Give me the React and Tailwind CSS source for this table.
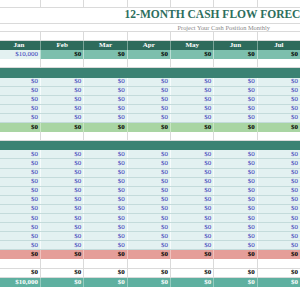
import React from 'react';

const months = ['Jan', 'Feb', 'Mar', 'Apr', 'May', 'Jun', 'Jul'];
const serif = { fontFamily: '"Liberation Serif", "Times New Roman", serif' };

function Cells({ rowCls, cellCls, values }) {
  return (
    <div className={`grid grid-cols-[repeat(7,43.33px)] h-[9.1px] ${rowCls || ''}`}>
      {values.map((v, i) => (
        <div key={i} className={`h-full flex items-center ${cellCls} ${typeof v === 'object' && v && v.cls ? v.cls : ''}`}>
          {typeof v === 'object' && v ? v.t : v}
        </div>
      ))}
    </div>
  );
}

function Blank({ h = 'h-[9.1px]' }) {
  return (
    <div className={`grid grid-cols-[repeat(7,43.33px)] ${h} border-b border-[#dadada]`}>
      {months.map((m) => (
        <div key={m} className="h-full border-r border-[#dadada]" />
      ))}
    </div>
  );
}

function Band() {
  return <div className="h-[9.1px] bg-[#3b8273] w-[304px]" />;
}

function Inputs({ n }) {
  return Array.from({ length: n }).map((_, r) => (
    <Cells
      key={r}
      rowCls="bg-[#e3f1f1] border-b border-[#c4dbdb]"
      cellCls="justify-end pr-[2px] text-[7px] leading-none text-[#3535b8] border-r border-[#f6fbfb]"
      values={months.map(() => '$0')}
    />
  ));
}

export default function App() {
  return (
    <div className="w-[300px] h-[300px] overflow-hidden bg-white" style={serif}>
      <div className="-ml-[2.3px] w-[304px]">
        <Blank h="h-[7.5px]" />
        <div className="h-[16px] border-b border-[#dadada] overflow-hidden">
          <div className="w-[452px] h-full flex items-center justify-center whitespace-nowrap text-[11.5px] font-bold text-[#2d6e5d]">
            12-MONTH CASH FLOW FORECAST
          </div>
        </div>
        <div className="h-[8.6px] border-b border-[#dadada] overflow-hidden">
          <div className="w-[452px] h-full flex items-center justify-center whitespace-nowrap text-[6.4px] text-[#8a8a8a]">
            Project Your Cash Position Monthly
          </div>
        </div>
        <Blank />
        <Cells
          rowCls="bg-[#2e6b5c]"
          cellCls="justify-center text-[7px] leading-none font-bold text-white border-r border-[#7aa398]"
          values={months}
        />
        <Cells
          rowCls="bg-[#7dbfad]"
          cellCls="justify-end pr-[2px] text-[7px] leading-none font-bold text-black border-r border-[#b9ddd3]"
          values={months.map((m, i) =>
            i === 0 ? { t: '$10,000', cls: 'bg-[#e3f1f1] !text-[#3535b8] !font-normal' } : '$0'
          )}
        />
        <Blank />
        <Band />
        <Inputs n={5} />
        <Cells
          rowCls="bg-[#a9d5a3]"
          cellCls="justify-end pr-[2px] text-[7px] leading-none font-bold text-black border-r border-[#c8e6c3]"
          values={months.map(() => '$0')}
        />
        <Blank />
        <Band />
        <Inputs n={11} />
        <Cells
          rowCls="bg-[#e59e99]"
          cellCls="justify-end pr-[2px] text-[7px] leading-none font-bold text-black border-r border-[#f0c2be]"
          values={months.map(() => '$0')}
        />
        <Blank />
        <Cells
          rowCls="bg-white border-b border-[#dadada]"
          cellCls="justify-end pr-[2px] text-[7px] leading-none font-bold text-black border-r border-[#dadada]"
          values={months.map(() => '$0')}
        />
        <Cells
          rowCls="bg-[#5eb0a0]"
          cellCls="justify-end pr-[2px] text-[7px] leading-none font-bold text-white border-r border-[#94cbbf]"
          values={months.map((m, i) => (i === 0 ? '$10,000' : '$0'))}
        />
      </div>
    </div>
  );
}
